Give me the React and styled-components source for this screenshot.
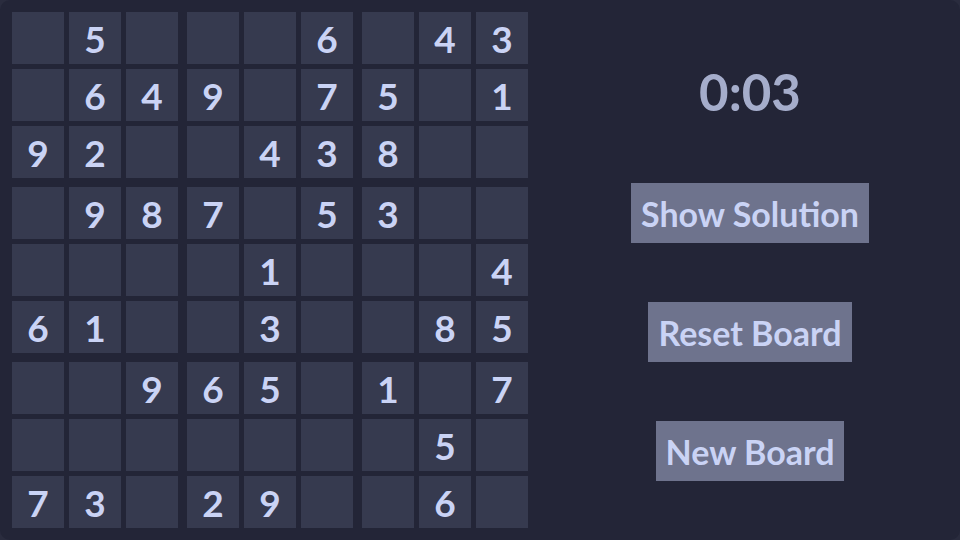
import React from "react";
import styled, { createGlobalStyle } from "styled-components";

const GlobalStyle = createGlobalStyle`
  html, body {
    margin: 0;
    padding: 0;
    background: #2a2c3e;
  }
  body {
    font-family: "Lato", "Noto Sans", sans-serif;
  }
`;

const puzzle = [
  "_5___6_43",
  "_649_75_1",
  "92__438__",
  "_987_53__",
  "____1___4",
  "61__3__85",
  "__965_1_7",
  "_______5_",
  "73_29__6_",
];

function boxCells(box) {
  const br = Math.floor(box / 3) * 3;
  const bc = (box % 3) * 3;
  const cells = [];
  for (let r = 0; r < 3; r++) {
    for (let c = 0; c < 3; c++) {
      const ch = puzzle[br + r][bc + c];
      cells.push(ch === "_" ? "" : ch);
    }
  }
  return cells;
}

function App() {
  return (
    <Page>
      <GlobalStyle />
      <BoardWrap>
        <Board>
          {[0, 1, 2, 3, 4, 5, 6, 7, 8].map((b) => (
            <Box key={b}>
              {boxCells(b).map((v, i) => (
                <Cell key={i}>{v}</Cell>
              ))}
            </Box>
          ))}
        </Board>
      </BoardWrap>
      <Panel>
        <Timer>0:03</Timer>
        <Button>Show Solution</Button>
        <Button>Reset Board</Button>
        <Button>New Board</Button>
      </Panel>
    </Page>
  );
}

const Page = styled.div`
  width: 960px;
  height: 540px;
  display: flex;
  background: #232537;
  border-radius: 10px;
  overflow: hidden;
`;

const BoardWrap = styled.div`
  width: 540px;
  padding: 12px;
  box-sizing: border-box;
`;

const Board = styled.div`
  display: grid;
  grid-template-columns: repeat(3, 166px);
  grid-template-rows: repeat(3, 166px);
  gap: 9px;
`;

const Box = styled.div`
  display: grid;
  grid-template-columns: repeat(3, 52px);
  grid-template-rows: repeat(3, 52px);
  gap: 5px;
`;

const Cell = styled.div`
  background: #363a4f;
  color: #cad3f5;
  font-size: 37px;
  font-weight: 700;
  display: flex;
  align-items: center;
  justify-content: center;
  line-height: 1;
`;

const Panel = styled.div`
  flex: 1;
  display: flex;
  flex-direction: column;
  align-items: center;
  padding-top: 62px;
  gap: 59px;
`;

const Timer = styled.div`
  height: 60px;
  line-height: 60px;
  margin-bottom: 2px;
  font-size: 51px;
  font-weight: 700;
  color: #a5adcb;
`;

const Button = styled.button`
  height: 60px;
  padding: 0 10px;
  border: none;
  border-radius: 0;
  background: #6e738d;
  color: #cad3f5;
  font-family: "Lato", "Noto Sans", sans-serif;
  font-size: 34px;
  font-weight: 700;
  cursor: pointer;
`;

export default App;
